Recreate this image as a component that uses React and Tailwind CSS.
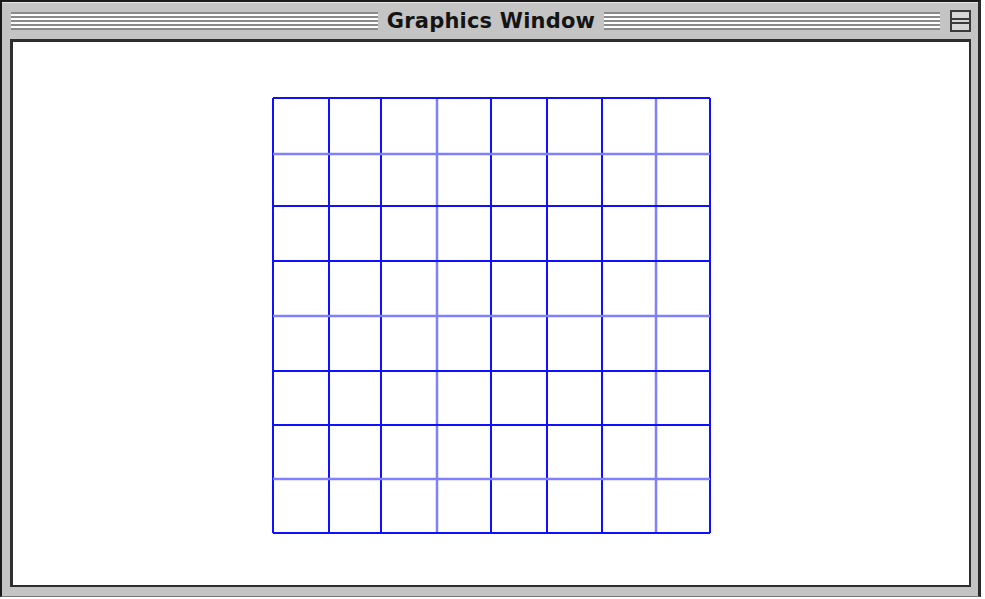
import React from "react";

const cols = [0, 56, 108, 164, 218, 274, 329, 383, 437];
const rows = [0, 56, 108, 163, 218, 273, 327, 381, 435];
const lightCols = [164, 383];
const lightRows = [56, 218, 381];

function Stripes({ className }) {
  return (
    <div className={`flex flex-col ${className}`}>
      <div className="h-[2px] bg-[#8a8a8a]" />
      <div className="h-[2px] bg-white" />
      <div className="h-[2px] bg-[#8a8a8a]" />
      <div className="h-[2px] bg-white" />
      <div className="h-[2px] bg-[#8a8a8a]" />
      <div className="h-[2px] bg-white" />
      <div className="h-[2px] bg-[#8a8a8a]" />
      <div className="h-[2px] bg-white" />
      <div className="h-[2px] bg-[#8a8a8a]" />
    </div>
  );
}

function Grid() {
  return (
    <svg width="440" height="438" viewBox="-1 -1 440 438">
      {cols.map((x) => (
        <line
          key={"c" + x}
          x1={x}
          y1={0}
          x2={x}
          y2={435}
          stroke={lightCols.includes(x) ? "#8080ff" : "#1010ff"}
          strokeWidth={lightCols.includes(x) ? 2.5 : 2}
        />
      ))}
      {rows.map((y) => (
        <line
          key={"r" + y}
          x1={0}
          y1={y}
          x2={437}
          y2={y}
          stroke={lightRows.includes(y) ? "#8080ff" : "#1010ff"}
          strokeWidth={lightRows.includes(y) ? 2.5 : 2}
        />
      ))}
    </svg>
  );
}

export default function App() {
  return (
    <div className="w-[985px] h-[599px] bg-white" style={{ fontFamily: "'DejaVu Sans', sans-serif" }}>
      {/* window frame */}
      <div className="w-[981px] h-[597px] border-l-2 border-t-2 border-r-[3px] border-b border-l-[#1a1a1a] border-t-[#1a1a1a] border-r-[#2a2a2a] border-b-[#777] bg-[#c4c4c4] flex flex-col">
        {/* title bar */}
        <div className="h-[37px] flex items-center pl-[9px] pr-[7px] border-t border-[#e6e6e6]">
          <Stripes className="w-[367px]" />
          <div className="w-[226px] text-center text-[21px] font-bold text-[#141414] leading-none tracking-[0.2px]">
            Graphics Window
          </div>
          <Stripes className="flex-1" />
          <div className="ml-[10px] w-[21px] h-[22px] border-2 border-[#3a3a3a] bg-[#d6d6d6] flex flex-col justify-center gap-[2px]">
            <div className="h-[2px] bg-[#3a3a3a]" />
            <div className="h-[2px] bg-[#3a3a3a]" />
          </div>
        </div>
        {/* content */}
        <div className="flex-1 ml-[8px] mr-[7px] mb-[9px] border-l-[3px] border-t-[3px] border-r-[2px] border-b-[2px] border-[#2e2e2e] bg-white flex items-center justify-center pt-[4px] pl-[2px]">
          <Grid />
        </div>
      </div>
    </div>
  );
}
